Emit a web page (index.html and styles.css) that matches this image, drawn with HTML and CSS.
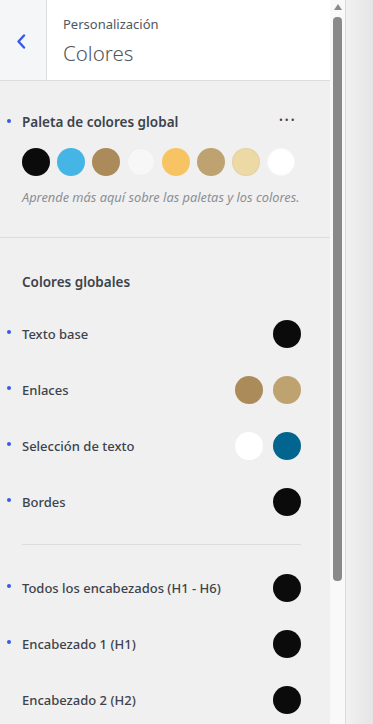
FILE: index.html
```html
<!DOCTYPE html>
<html lang="es">
<head>
    <meta charset="UTF-8">
    <meta name="viewport" content="width=device-width, initial-scale=1.0">
    <title>Personalización - Colores</title>
    <link rel="stylesheet" href="styles.css">
</head>
<body>
    <div class="sidebar">
        <div class="panel">
            <div class="panel-header">
                <button class="back-btn" aria-label="Volver">
                    <svg width="10" height="15" viewBox="0 0 10 15"><path d="M8 1.5 L2.5 7.5 L8 13.5" fill="none" stroke="#3858e9" stroke-width="2.4" stroke-linecap="round" stroke-linejoin="round"/></svg>
                </button>
                <div class="titles">
                    <span class="action">Personalización</span>
                    <h3>Colores</h3>
                </div>
            </div>

            <div class="section palette-section">
                <div class="section-head">
                    <span class="dot"></span>
                    <h4>Paleta de colores global</h4>
                    <span class="more">&middot;&middot;&middot;</span>
                </div>
                <div class="swatches">
                    <span class="swatch" style="background:#0b0b0b"></span>
                    <span class="swatch" style="background:#44b5e5"></span>
                    <span class="swatch" style="background:#aa8b59"></span>
                    <span class="swatch light" style="background:#f7f7f7"></span>
                    <span class="swatch" style="background:#f8c463"></span>
                    <span class="swatch" style="background:#bea26f"></span>
                    <span class="swatch light" style="background:#edd9a6"></span>
                    <span class="swatch light" style="background:#ffffff"></span>
                </div>
                <p class="hint">Aprende más aquí sobre las paletas y los colores.</p>
            </div>

            <div class="section globals">
                <h4 class="group-title">Colores globales</h4>

                <div class="row">
                    <span class="dot"></span>
                    <span class="label">Texto base</span>
                    <span class="swatch" style="background:#0b0b0b"></span>
                </div>
                <div class="row">
                    <span class="dot"></span>
                    <span class="label">Enlaces</span>
                    <span class="swatch" style="background:#aa8b59"></span>
                    <span class="swatch" style="background:#bea26f"></span>
                </div>
                <div class="row">
                    <span class="dot"></span>
                    <span class="label">Selección de texto</span>
                    <span class="swatch" style="background:#ffffff"></span>
                    <span class="swatch" style="background:#02658f"></span>
                </div>
                <div class="row">
                    <span class="dot"></span>
                    <span class="label">Bordes</span>
                    <span class="swatch" style="background:#0b0b0b"></span>
                </div>

                <hr class="divider">

                <div class="row">
                    <span class="dot"></span>
                    <span class="label">Todos los encabezados (H1 - H6)</span>
                    <span class="swatch" style="background:#0b0b0b"></span>
                </div>
                <div class="row">
                    <span class="dot"></span>
                    <span class="label">Encabezado 1 (H1)</span>
                    <span class="swatch" style="background:#0b0b0b"></span>
                </div>
                <div class="row">
                    <span class="label">Encabezado 2 (H2)</span>
                    <span class="swatch" style="background:#0b0b0b"></span>
                </div>
            </div>
        </div>

        <div class="scrollbar">
            <span class="arrow-up"></span>
            <span class="thumb"></span>
        </div>
    </div>
    <div class="backdrop"></div>
</body>
</html>
```

FILE: styles.css
```css
* {
    margin: 0;
    padding: 0;
    box-sizing: border-box;
}

html, body {
    height: 100%;
    overflow: hidden;
}

body {
    display: flex;
    font-family: 'Noto Sans', 'Open Sans', sans-serif;
    color: #3c434a;
    background: #f0f0f1;
}

.sidebar {
    display: flex;
    width: 346px;
    height: 724px;
    border-right: 1px solid #dcdcde;
}

.panel {
    width: 330px;
    background: #f0f0f1;
}

/* cabecera */
.panel-header {
    display: flex;
    height: 81px;
    background: #fff;
    border-bottom: 1px solid #dcdcde;
}

.back-btn {
    width: 47px;
    background: #f5f6f7;
    border: none;
    border-right: 1px solid #dcdcde;
    display: flex;
    align-items: center;
    justify-content: center;
    padding-right: 5px;
    padding-top: 2px;
    cursor: pointer;
}

.titles {
    padding: 14px 16px 0;
    display: flex;
    flex-direction: column;
}

.action {
    font-size: 13px;
    line-height: 20px;
    color: #50575e;
}

.titles h3 {
    font-size: 20.5px;
    font-weight: 300;
    line-height: 32px;
    color: #50575e;
    margin-top: 3px;
}

/* paleta */
.section {
    padding: 0 29px 0 22px;
}

.palette-section {
    padding-top: 30px;
    padding-bottom: 31px;
    border-bottom: 1px solid #dcdcde;
}

.section-head {
    display: flex;
    align-items: center;
    position: relative;
    height: 22px;
}

.dot {
    position: absolute;
    left: -15px;
    top: 8px;
    width: 4px;
    height: 4px;
    border-radius: 50%;
    background: #3858e9;
}

h4 {
    font-size: 13.5px;
    font-weight: 600;
    color: #3c434a;
}

.more {
    margin-left: auto;
    margin-right: 5px;
    font-size: 18px;
    line-height: 10px;
    letter-spacing: 1px;
    color: #3c434a;
    padding-bottom: 6px;
}

.swatches {
    display: flex;
    gap: 7px;
    margin-top: 15px;
}

.swatch {
    width: 28px;
    height: 28px;
    border-radius: 50%;
    flex-shrink: 0;
}

.swatch.light {
    box-shadow: inset 0 0 0 1px rgba(0, 0, 0, 0.04);
}

.hint {
    margin-top: 13px;
    font-size: 12.8px;
    font-style: italic;
    color: #8c8f94;
    line-height: 17px;
    white-space: nowrap;
}

/* colores globales */
.globals {
    padding-top: 33px;
}

.group-title {
    line-height: 22px;
    margin-bottom: 13px;
}

.row {
    position: relative;
    display: flex;
    align-items: center;
    gap: 10px;
    height: 56px;
}

.row .dot {
    top: 24px;
}

.label {
    font-size: 13px;
    font-weight: 500;
    color: #3c434a;
    margin-right: auto;
}

.divider {
    border: none;
    border-top: 1px solid #dcdcde;
    margin: 14px 0 15px;
}

/* barra de desplazamiento */
.scrollbar {
    width: 15px;
    background: #f9f9f9;
    display: flex;
    flex-direction: column;
    align-items: center;
    padding-top: 4px;
}

.arrow-up {
    width: 0;
    height: 0;
    border-left: 4.5px solid transparent;
    border-right: 4.5px solid transparent;
    border-bottom: 6px solid #8a8a8a;
}

.thumb {
    width: 9px;
    height: 564px;
    margin-top: 7px;
    background: #8a8a8a;
    border-radius: 4px;
}

.backdrop {
    flex: 1;
    background: linear-gradient(to right, #f1f1f1, #e5e5e5);
}
```
